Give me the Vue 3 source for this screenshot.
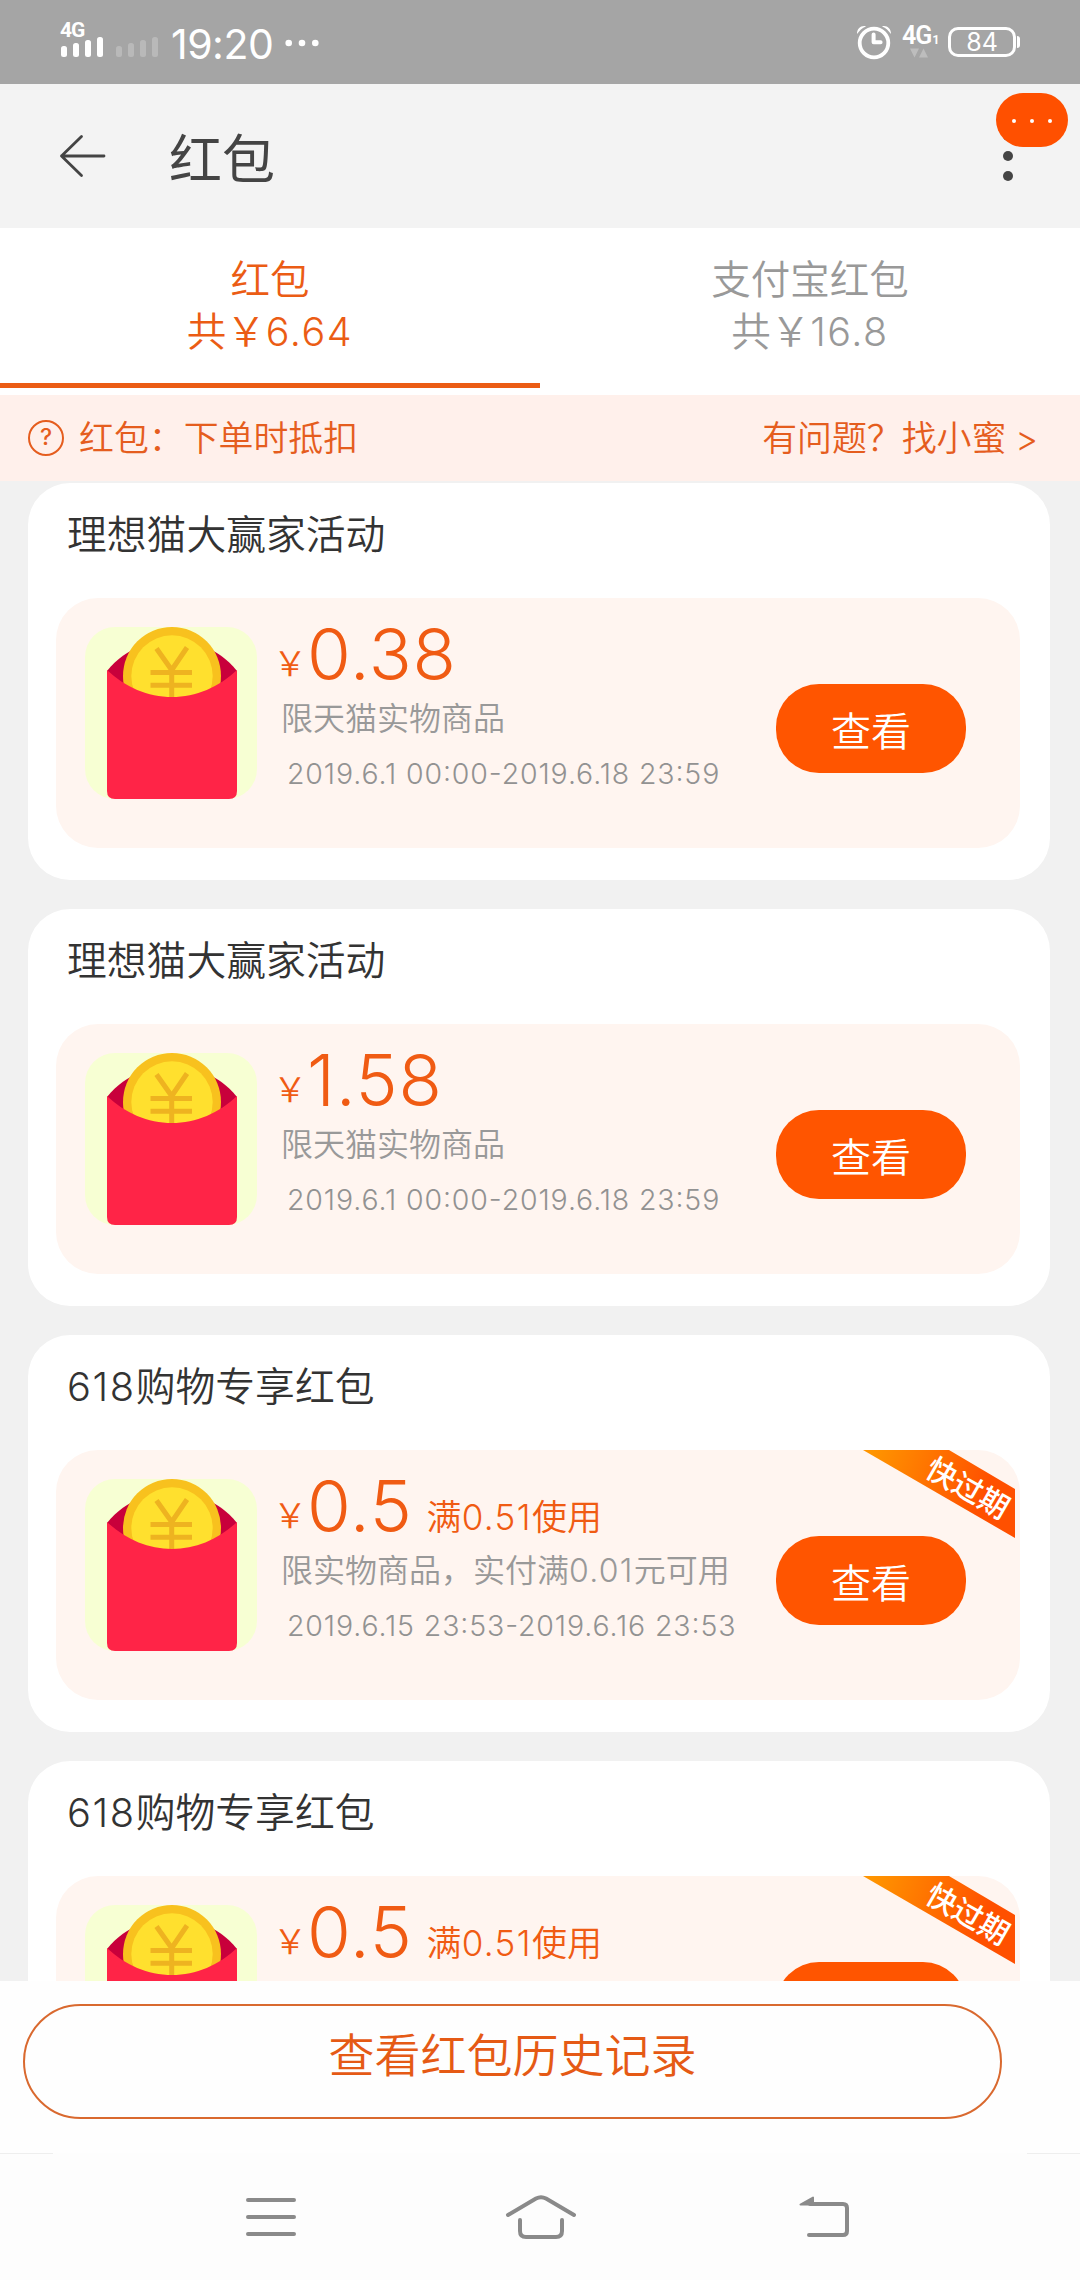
<script setup>
const coupons = [
  { title: '理想猫大赢家活动', amount: '0.38', cond: '', desc: '限天猫实物商品', date: '2019.6.1 00:00-2019.6.18 23:59', action: '查看', soon: false },
  { title: '理想猫大赢家活动', amount: '1.58', cond: '', desc: '限天猫实物商品', date: '2019.6.1 00:00-2019.6.18 23:59', action: '查看', soon: false },
  { title: '618购物专享红包', amount: '0.5', cond: '满0.51使用', desc: '限实物商品，实付满0.01元可用', date: '2019.6.15 23:53-2019.6.16 23:53', action: '查看', soon: true },
  { title: '618购物专享红包', amount: '0.5', cond: '满0.51使用', desc: '', date: '', action: '', soon: true },
]

// Splits mixed text so that numbers can be tracked apart from the Chinese characters.
const runs = (text) =>
  text.split(/([\d.]+)/).filter(Boolean).map((t) => ({ t, digits: /^[\d.]+$/.test(t) }))
</script>

<template>
  <div class="screen">
    <div class="status">
      <div class="signals">
        <span class="net">4G</span>
        <svg width="98" height="20" viewBox="0 0 98 20">
          <g fill="#fff">
            <rect x="0" y="9" width="6" height="11" rx="2.5" />
            <rect x="12" y="6" width="6" height="14" rx="2.5" />
            <rect x="24" y="3" width="6" height="17" rx="2.5" />
            <rect x="36" y="0" width="6" height="20" rx="2.5" />
          </g>
          <g fill="#b9b9b9">
            <rect x="55" y="9" width="6" height="11" rx="2.5" />
            <rect x="67" y="6" width="6" height="14" rx="2.5" />
            <rect x="79" y="3" width="6" height="17" rx="2.5" />
            <rect x="91" y="0" width="6" height="20" rx="2.5" />
          </g>
        </svg>
      </div>
      <span class="time">19:20</span>
      <svg class="more" width="34" height="8" viewBox="0 0 34 8" fill="#fff">
        <circle cx="3.7" cy="4" r="3.3" /><circle cx="17" cy="4" r="3.3" /><circle cx="30.3" cy="4" r="3.3" />
      </svg>
      <div class="status-right">
        <svg width="36" height="36" viewBox="0 0 36 36" fill="none" stroke="#fff">
          <circle cx="18" cy="19" r="14.3" stroke-width="3.8" />
          <path d="M17.6 10.6V18.2H24.6" stroke-width="4" stroke-linecap="round" stroke-linejoin="round" />
          <path d="M1 10C.8 4.500 5.500 1 10 2.400C6 4 3.500 6.500 1 10Z M35 10C35.200 4.500 30.500 1 26 2.400C30 4 32.500 6.500 35 10Z" fill="#fff" stroke="none" />
        </svg>
        <div class="data">
          <span class="net net-big">4G<small>1</small></span>
          <svg width="20" height="10" viewBox="0 0 20 10" fill="#bdbdbd"><path d="M1 0.500H10L5.500 9.500ZM10 9.500H19L14.500 0.500Z" /></svg>
        </div>
        <div class="battery">84</div>
      </div>
    </div>

    <header class="header">
      <svg width="50" height="48" viewBox="0 0 50 48" fill="none" stroke="#444" stroke-width="2.8" stroke-linecap="round" stroke-linejoin="round">
        <path d="M23.500 4.500L3.500 24L23.500 43.500M3.500 24H46" />
      </svg>
      <h1>红包</h1>
      <div class="menu">
        <i></i><i></i><i></i>
        <span class="badge"><b></b><b></b><b></b></span>
      </div>
    </header>

    <nav class="tabs">
      <div class="tab active"><span>红包</span><span>共￥<span class="digits">6.64</span></span></div>
      <div class="tab"><span>支付宝红包</span><span>共￥<span class="digits">16.8</span></span></div>
    </nav>

    <div class="notice">
      <span class="q">?</span>
      <span>红包：下单时抵扣</span>
      <span class="help">有问题？找小蜜 <em>&gt;</em></span>
    </div>

    <main class="list">
      <section v-for="(c, i) in coupons" :key="i" class="card">
        <h2><span v-for="(r, k) in runs(c.title)" :key="k" :class="{ digits: r.digits }">{{ r.t }}</span></h2>
        <div class="coupon">
          <svg class="pic" width="172" height="172" viewBox="0 0 172 172">
            <rect width="172" height="172" rx="30" fill="#f7ffd3" />
            <path d="M22 44C42 19 68 14 87 14S132 19 152 44L130 76H44Z" fill="#c8003b" />
            <circle cx="87" cy="49" r="49" fill="#f8c11e" />
            <circle cx="87" cy="49" r="40.700" fill="#ffe02e" />
            <path d="M71.500 21.500L86.700 43L102 20.500M86.700 43V75M65.500 45.500H107M65.500 58.300H107" fill="none" stroke="#eeb320" stroke-width="5" />
            <path d="M22 43C40 60 63 70 87 70S134 60 152 43V164Q152 172 144 172H30Q22 172 22 164Z" fill="#ff2447" />
          </svg>
          <div class="info">
            <div class="amount">
              <span class="yen">￥</span><span class="num">{{ c.amount }}</span>
              <span v-if="c.cond" class="cond"><span v-for="(r, k) in runs(c.cond)" :key="k" :class="{ digits: r.digits }">{{ r.t }}</span></span>
            </div>
            <div v-if="c.desc" class="desc"><span v-for="(r, k) in runs(c.desc)" :key="k" :class="{ digits: r.digits }">{{ r.t }}</span></div>
            <div v-if="c.date" class="date">{{ c.date }}</div>
          </div>
          <button class="view">{{ c.action }}</button>
          <div v-if="c.soon" class="ribbon"><span>快过期</span></div>
        </div>
      </section>
    </main>

    <footer class="footer">
      <button class="history">查看红包历史记录</button>
    </footer>

    <div class="sysnav">
      <svg width="52" height="44" viewBox="0 0 52 44" fill="none" stroke="#8a8a8a" stroke-width="4" stroke-linecap="round">
        <path d="M3 5H49M3 22H49M3 39H49" />
      </svg>
      <svg class="home" width="72" height="48" viewBox="0 0 72 48" fill="none" stroke="#8a8a8a" stroke-width="4" stroke-linecap="round" stroke-linejoin="round">
        <path d="M3 22L31 5.500Q36 2.800 41 5.500L69 22M15 27V38Q15 44 21 44H51Q57 44 57 38V27" />
      </svg>
      <svg class="back" width="54" height="48" viewBox="0 0 54 48" fill="none" stroke="#8a8a8a" stroke-width="4" stroke-linecap="round" stroke-linejoin="round">
        <path d="M12 11H45Q49 11 49 15V38Q49 42 45 42H11" />
        <path d="M2.500 11.500L15 4.500V11.500Z" fill="#8a8a8a" stroke-width="2" />
      </svg>
    </div>
  </div>
</template>

<style>
body { margin: 0; }
</style>

<style scoped>
* { box-sizing: border-box; }
.screen {
  width: 1080px;
  height: 2280px;
  display: flex;
  flex-direction: column;
  overflow: hidden;
  background: #f1f1f1;
  color: #333;
  font-family: Inter, "Noto Sans CJK SC", sans-serif;
  font-weight: 350;
}
h1, h2 { margin: 0; font-weight: 350; }
button { font: inherit; padding: 0; border: 0; }
.digits { letter-spacing: 0.04em; }

.status {
  flex: none;
  height: 84px;
  display: flex;
  background: #a5a5a5;
  color: #fff;
  padding-left: 60px;
}
.signals { width: 111px; padding-top: 20px; }
.net {
  display: block;
  height: 17px;
  line-height: 20px;
  font-family: Roboto, sans-serif;
  font-size: 21px;
  font-weight: 700;
  letter-spacing: -1px;
}
.signals svg { display: block; margin-left: 1px; }
.time { width: 114px; font-size: 41px; line-height: 88px; font-weight: 400; letter-spacing: -0.5px; white-space: nowrap; }
.more { margin-top: 39px; }
.status-right { margin-left: auto; display: flex; padding-right: 64px; }
.status-right > svg { margin-top: 24px; }
.data { width: 46px; margin-left: 10px; padding-top: 24px; white-space: nowrap; }
.net-big { height: 24px; line-height: 24px; font-size: 25px; font-weight: 600; letter-spacing: -1px; }
.net-big small { font-size: 13px; margin-left: 1px; }
.data svg { display: block; margin-left: 7px; }
.battery {
  position: relative;
  width: 68px;
  height: 30px;
  margin-top: 27px;
  border: 3px solid #fff;
  border-radius: 10px;
  font-size: 25px;
  font-weight: 400;
  line-height: 25px;
  text-align: center;
}
.battery::after {
  content: "";
  position: absolute;
  right: -7px;
  top: 6px;
  width: 3px;
  height: 12px;
  border-radius: 0 3px 3px 0;
  background: #fff;
}

.header {
  flex: none;
  height: 144px;
  display: flex;
  align-items: center;
  background: #f3f3f3;
  padding: 0 67px 0 58px;
}
h1 { margin-left: 61px; padding-top: 7px; font-size: 53px; line-height: 80px; font-weight: 400; color: #444; }
.menu { position: relative; margin-left: auto; display: flex; flex-direction: column; gap: 9.500px; }
.menu i { width: 10.500px; height: 10.500px; border-radius: 50%; background: #444; }
.badge {
  position: absolute;
  left: -7px;
  top: -38px;
  width: 72px;
  height: 54px;
  border-radius: 27px;
  background: #ff5000;
  display: flex;
  align-items: center;
  justify-content: center;
  gap: 14px;
}
.badge b { width: 4px; height: 4px; border-radius: 50%; background: #fff; margin-top: 2px; }

.tabs { flex: none; height: 167px; display: flex; background: #fff; color: #999; font-size: 39.500px; line-height: 52px; }
.tab {
  width: 540px;
  height: 160px;
  padding-top: 26px;
  display: flex;
  flex-direction: column;
  align-items: center;
}
.tab.active { color: #eb5c14; border-bottom: 5px solid #eb5c14; }

.notice {
  flex: none;
  height: 86px;
  display: flex;
  align-items: center;
  padding: 0 42px 4px 28px;
  background: #fff0eb;
  color: #e55d1e;
  font-size: 34.900px;
}
.q {
  width: 36px;
  height: 36px;
  margin: 3px 15px 0 0;
  border: 2.500px solid #e55d1e;
  border-radius: 50%;
  font-size: 23px;
  font-weight: 500;
  line-height: 31px;
  text-align: center;
}
.help { margin-left: auto; }
.help em { font-style: normal; margin-left: -1px; }

.list { flex: 1; min-height: 0; overflow: hidden; padding: 2px 30px 0 28px; }
.card { height: 397px; margin-bottom: 29px; border-radius: 42px; background: #fff; padding: 0 30px 0 28px; }
h2 { height: 115px; padding-left: 11px; font-size: 39.800px; line-height: 104px; }
.coupon {
  position: relative;
  display: flex;
  height: 250px;
  border-radius: 42px;
  background: #fff5f0;
  padding-left: 29px;
}
.pic { flex: none; margin-top: 29px; }
.info { flex: 1; padding: 19px 0 0 22px; white-space: nowrap; }
.amount { height: 74px; line-height: 74px; color: #f05b13; font-size: 71px; display: flex; align-items: baseline; }
.yen { font-size: 34px; width: 28px; text-indent: -6px; position: relative; top: -4px; }
.num { letter-spacing: 0.8px; }
.cond { font-size: 35px; margin-left: 14px; position: relative; top: -2px; }
.desc { margin-top: 8px; height: 40px; padding-left: 2px; font-size: 32px; line-height: 40px; color: #999; }
.date {
  margin-top: 15px;
  height: 40px;
  padding-left: 8px;
  font-size: 28.500px;
  line-height: 40px;
  color: #929292;
  letter-spacing: 0.88px;
  font-feature-settings: "case";
}
.view {
  flex: none;
  width: 190px;
  height: 89px;
  margin: 86px 54px 0 0;
  border-radius: 43px;
  background: #ff5500;
  color: #fff;
  font-size: 40px;
  line-height: 95px;
}
.ribbon {
  position: absolute;
  left: 807px;
  top: 0;
  width: 152px;
  height: 88px;
  background: linear-gradient(110deg, #ff9500 5%, #ff5000 75%);
  clip-path: polygon(0 0, 86px 0, 152px 39px, 152px 88px);
  color: #fff;
  display: flex;
}
.ribbon span {
  margin: 18px 0 0 60px;
  height: 40px;
  font-size: 30px;
  line-height: 40px;
  font-weight: 500;
  white-space: nowrap;
  transform: rotate(30deg);
}

.footer { flex: none; height: 172px; padding: 23px 0 0 23px; background: #fefefe; }
.history {
  display: block;
  width: 979px;
  height: 115px;
  border: 2px solid #d9692f;
  border-radius: 58px;
  background: transparent;
  color: #e55a15;
  font-size: 46px;
  line-height: 97px;
  padding-bottom: 12px;
}
.sysnav {
  position: relative;
  flex: none;
  height: 127px;
  display: flex;
  background: #fdfdfd;
  padding: 42px 0 0 245px;
}
.sysnav::before, .sysnav::after { content: ""; position: absolute; top: 0; left: 0; width: 53px; height: 1px; background: #eee; }
.sysnav::after { left: auto; right: 0; }
.home { margin: -2px 0 0 208px; }
.back { margin: -2px 0 0 221px; }
</style>
